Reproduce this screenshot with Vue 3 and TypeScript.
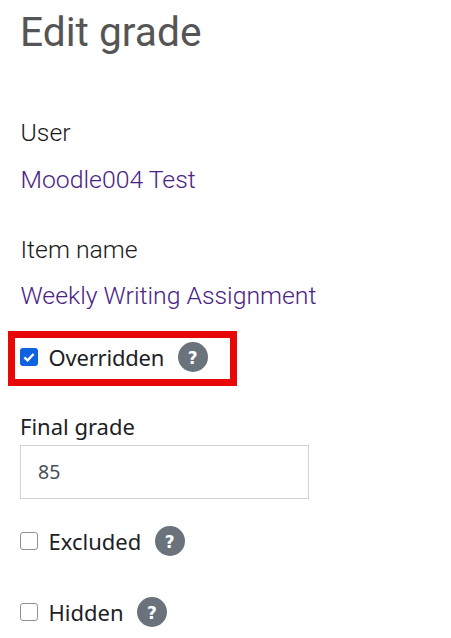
<script setup lang="ts">
const details = [
  { label: 'User', value: 'Moodle004 Test' },
  { label: 'Item name', value: 'Weekly Writing Assignment' },
]
</script>

<template>
  <main class="page">
    <h1 class="title">Edit grade</h1>
    <section class="details">
      <div v-for="d in details" :key="d.label" class="detail">
        <div class="detail-label">{{ d.label }}</div>
        <a class="detail-value" href="#">{{ d.value }}</a>
      </div>
    </section>
    <div class="highlight">
      <label class="check">
        <span class="box checked">
          <svg viewBox="0 0 18 18" width="18" height="18"><path d="M4.4 9.3l3.2 3.1 6-6.4" fill="none" stroke="#fff" stroke-width="2.4"/></svg>
        </span>
        <span class="check-label tight">Overridden</span>
        <span class="help">?</span>
      </label>
    </div>
    <div class="field">
      <label class="field-label">Final grade</label>
      <div class="input">85</div>
    </div>
    <label class="check excluded">
      <span class="box"></span>
      <span class="check-label">Excluded</span>
      <span class="help">?</span>
    </label>
    <label class="check hidden">
      <span class="box"></span>
      <span class="check-label">Hidden</span>
      <span class="help">?</span>
    </label>
  </main>
</template>

<style scoped>
.page {
  height: 638px;
  overflow: hidden;
  box-sizing: border-box;
  padding: 9px 0 0 20px;
  background: #fff;
  color: #1d2125;
  font-family: "Noto Sans", sans-serif;
}
.title {
  margin: 0;
  font: 400 40.7px/46px Roboto, sans-serif;
  color: #555;
}
.details {
  margin: 61px 0 0 0.5px;
  font-family: Roboto, sans-serif;
  font-weight: 300;
  font-size: 24.8px;
  line-height: 34px;
}
.detail + .detail {
  margin-top: 36px;
}
.detail-label {
  color: #1a1a1a;
  margin-bottom: 13px;
}
.detail + .detail .detail-label {
  margin-bottom: 12px;
}
.detail-value {
  display: block;
  color: #4b2383;
  text-decoration: none;
}
.highlight {
  margin: 18px 0 0 -12px;
  width: 229px;
  height: 55px;
  box-sizing: border-box;
  border: 7px solid #e80808;
  padding: 0 0 3px 5px;
  display: flex;
  align-items: center;
}
.check {
  display: flex;
  align-items: center;
  font-size: 22px;
  line-height: 30px;
}
.box {
  width: 18px;
  height: 18px;
  box-sizing: border-box;
  border: 1px solid #8f8f9d;
  border-radius: 3px;
  background: #fff;
  flex: none;
}
.box.checked {
  border: 0;
  background: #0f62e0;
}
.box svg {
  display: block;
}
.check-label {
  margin-left: 10.5px;
}
.check-label.tight {
  letter-spacing: -0.2px;
}
.help {
  margin-left: 13.5px;
  width: 30px;
  height: 30px;
  border-radius: 50%;
  background: #6a737b;
  color: #fff;
  font: 700 17px/32px "DejaVu Sans", sans-serif;
  text-align: center;
}
.field {
  margin-top: 21px;
}
.field-label {
  display: block;
  font-size: 22px;
  line-height: 38px;
}
.input {
  width: 289px;
  height: 54px;
  box-sizing: border-box;
  border: 1px solid #ced4da;
  padding-left: 17px;
  color: #495057;
  font-size: 19.5px;
  line-height: 52px;
}
.excluded {
  margin-top: 27px;
}
.hidden {
  margin-top: 41px;
}
</style>
